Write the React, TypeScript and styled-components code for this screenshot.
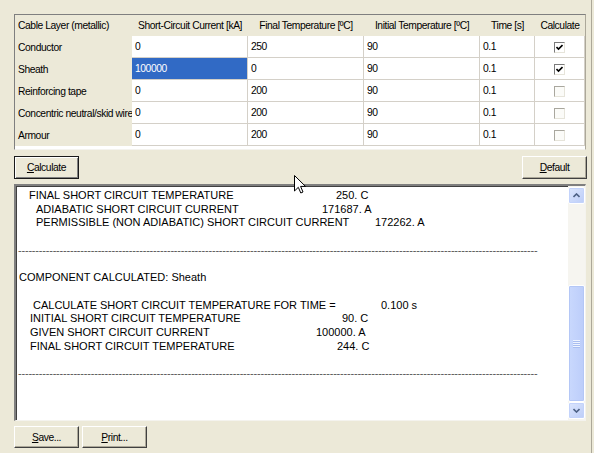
import React from 'react';
import styled, { createGlobalStyle, css } from 'styled-components';

const Global = createGlobalStyle`
  html, body { margin: 0; padding: 0; background: #ece9d8; }
  body { font-family: "Liberation Sans", Arial, sans-serif; font-size: 11px; color: #000; }
  * { box-sizing: border-box; }
`;

const uiFont = `"Liberation Sans", Arial, sans-serif`;

const Window = styled.div`
  position: relative;
  width: 592px;
  height: 453px;
  padding: 14px 0 0 14px;
  background: #ece9d8;
  border-right: 1px solid #aca899;
  overflow: hidden;
  display: flex;
  flex-direction: column;
`;

const GridPanel = styled.div`
  width: 572px;
  height: 136px;
  flex: 0 0 136px;
  border-top: 1px solid #7f7f7f;
  border-left: 1px solid #7f7f7f;
  border-right: 1px solid #aca899;
  border-bottom: 1px solid #f4f3ee;
  background: #fff;
  display: grid;
  grid-template-columns: 117px 116px 116px 116px 55px 50px;
  grid-template-rows: 21px;
  grid-auto-rows: 22px;
  align-content: start;
  font-family: ${uiFont};
  font-size: 10.3px;
  letter-spacing: -0.42px;
`;

const HeadCell = styled.div<{ $left?: boolean }>`
  background: #ece9d8;
  display: flex;
  align-items: center;
  justify-content: ${p => (p.$left ? 'flex-start' : 'center')};
  padding: 0 3px;
  white-space: nowrap;
  overflow: hidden;
  color: #000;
`;

const RowHead = styled.div`
  background: #ece9d8;
  display: flex;
  align-items: center;
  padding: 0 3px;
  white-space: nowrap;
  overflow: hidden;
`;

const Cell = styled.div<{ $selected?: boolean; $center?: boolean }>`
  display: flex;
  align-items: center;
  justify-content: ${p => (p.$center ? 'center' : 'flex-start')};
  padding: 0 3px;
  border-right: 1px solid #d4d0c8;
  border-bottom: 1px solid #d4d0c8;
  white-space: nowrap;
  overflow: hidden;
  ${p =>
    p.$selected &&
    css`
      background: #316ac5;
      color: #fff;
    `}
`;

const Check = styled.span<{ $checked?: boolean }>`
  width: 11px;
  height: 11px;
  display: flex;
  align-items: center;
  justify-content: center;
  border-top: 1px solid ${p => (p.$checked ? '#7a7a7a' : '#a9a79e')};
  border-left: 1px solid ${p => (p.$checked ? '#7a7a7a' : '#a9a79e')};
  border-right: 1px solid #e6e4da;
  border-bottom: 1px solid #e6e4da;
  background: ${p => (p.$checked ? '#fff' : '#fbfbf8')};
  margin-top: 2px;
`;

const ButtonRow = styled.div`
  width: 573px;
  height: 23px;
  flex: 0 0 23px;
  margin-top: 6px;
  display: flex;
  justify-content: space-between;
`;

const BottomRow = styled.div`
  width: 573px;
  height: 22px;
  flex: 0 0 22px;
  margin-top: 5px;
  display: flex;
  gap: 3px;
`;

const Button = styled.button<{ $focused?: boolean }>`
  width: 65px;
  height: 100%;
  padding: 0;
  background: #ece9d8;
  color: #000;
  font-family: ${uiFont};
  font-size: 10.3px;
  letter-spacing: -0.42px;
  border: 1px solid;
  border-color: #fff #404040 #404040 #fff;
  box-shadow: inset -1px -1px 0 #aca899;
  ${p =>
    p.$focused &&
    css`
      border-color: #1a1a1a;
      box-shadow: inset 1px 1px 0 #fff, inset -1px -1px 0 #808080;
    `}
  u { text-decoration: underline; }
`;

const Output = styled.div`
  width: 572px;
  height: 237px;
  flex: 0 0 237px;
  margin-top: 5px;
  background: #fff;
  border-top: 2px solid #7f7f7f;
  border-left: 2px solid #7f7f7f;
  border-right: 1px solid #f4f3ee;
  border-bottom: 1px solid #f4f3ee;
  box-shadow: inset 1px 1px 0 #404040;
  display: flex;
`;

const OutputText = styled.div`
  flex: 1;
  padding-top: 3px;
  font-family: "Liberation Sans", Arial, sans-serif;
  font-size: 11px;
  color: #000;
  overflow: hidden;
`;

const Line = styled.div<{ $indent?: number }>`
  display: flex;
  height: 13.7px;
  line-height: 13.7px;
  padding-left: ${p => p.$indent ?? 0}px;
  white-space: pre;
`;

const Label = styled.span<{ $w: number }>`
  flex: 0 0 ${p => p.$w}px;
`;

const Dashes = styled.div`
  white-space: nowrap;
  letter-spacing: -0.2px;
  color: #555;
`;

const ScrollBar = styled.div`
  width: 17px;
  flex: 0 0 17px;
  background: #f6f5f0;
  display: flex;
  flex-direction: column;
  padding: 1px 0;
`;

const ArrowBtn = styled.div`
  width: 17px;
  height: 17px;
  flex: 0 0 17px;
  border-radius: 2px;
  border: 1px solid #fff;
  background: linear-gradient(135deg, #dce6fd, #bccdf8);
  box-shadow: inset 0 0 0 1px #c3d3fb;
  display: flex;
  align-items: center;
  justify-content: center;
`;

const Track = styled.div`
  flex: 1;
  display: flex;
  flex-direction: column;
`;

const Thumb = styled.div`
  margin-top: auto;
  height: 117px;
  border-radius: 2px;
  border: 1px solid #fff;
  background: linear-gradient(90deg, #c9d8fd, #bccdfa);
  box-shadow: inset 0 0 0 1px #b4c7f6;
  display: flex;
  align-items: center;
  justify-content: center;
`;

const Grip = styled.div`
  width: 7px;
  display: flex;
  flex-direction: column;
  gap: 1px;
  span { height: 1px; background: #eef3ff; box-shadow: 0 1px 0 #a9bdf0; }
`;

const Cursor = styled.svg`
  position: absolute;
  left: 294px;
  top: 175px;
`;

type Row = {
  name: string;
  sc: string;
  fin: string;
  init: string;
  time: string;
  calc: boolean;
  sel?: boolean;
};

const rows: Row[] = [
  { name: 'Conductor', sc: '0', fin: '250', init: '90', time: '0.1', calc: true },
  { name: 'Sheath', sc: '100000', fin: '0', init: '90', time: '0.1', calc: true, sel: true },
  { name: 'Reinforcing tape', sc: '0', fin: '200', init: '90', time: '0.1', calc: false },
  { name: 'Concentric neutral/skid wire', sc: '0', fin: '200', init: '90', time: '0.1', calc: false },
  { name: 'Armour', sc: '0', fin: '200', init: '90', time: '0.1', calc: false },
];

const dash = '-'.repeat(150);

const Chevron = ({ up }: { up?: boolean }) => (
  <svg width="7" height="5" viewBox="0 0 7 5">
    <path
      d={up ? 'M0.5 4 L3.5 1 L6.5 4' : 'M0.5 1 L3.5 4 L6.5 1'}
      fill="none"
      stroke="#4d6185"
      strokeWidth="1.6"
    />
  </svg>
);

export default function App() {
  return (
    <>
      <Global />
      <Window>
        <GridPanel>
          <HeadCell $left>Cable Layer (metallic)</HeadCell>
          <HeadCell>Short-Circuit Current [kA]</HeadCell>
          <HeadCell>Final Temperature [ºC]</HeadCell>
          <HeadCell>Initial Temperature [ºC]</HeadCell>
          <HeadCell>Time [s]</HeadCell>
          <HeadCell>Calculate</HeadCell>
          {rows.map(r => (
            <React.Fragment key={r.name}>
              <RowHead>{r.name}</RowHead>
              <Cell $selected={r.sel}>{r.sc}</Cell>
              <Cell>{r.fin}</Cell>
              <Cell>{r.init}</Cell>
              <Cell>{r.time}</Cell>
              <Cell $center>
                <Check $checked={r.calc}>
                  {r.calc && (
                    <svg width="7" height="7" viewBox="0 0 7 7">
                      <path d="M0.5 3 L2.5 5 L6.5 1" fill="none" stroke="#000" strokeWidth="1.6" />
                    </svg>
                  )}
                </Check>
              </Cell>
            </React.Fragment>
          ))}
        </GridPanel>

        <ButtonRow>
          <Button $focused>
            <u>C</u>alculate
          </Button>
          <Button>
            <u>D</u>efault
          </Button>
        </ButtonRow>

        <Output>
          <OutputText>
            <Line $indent={13}>
              <Label $w={307}>FINAL SHORT CIRCUIT TEMPERATURE</Label>250. C
            </Line>
            <Line $indent={20}>
              <Label $w={286}>ADIABATIC SHORT CIRCUIT CURRENT</Label>171687. A
            </Line>
            <Line $indent={20}>
              <Label $w={339}>PERMISSIBLE (NON ADIABATIC) SHORT CIRCUIT CURRENT</Label>172262. A
            </Line>
            <Line />
            <Line $indent={2}>
              <Dashes>{dash}</Dashes>
            </Line>
            <Line />
            <Line $indent={3}>COMPONENT CALCULATED: Sheath</Line>
            <Line />
            <Line $indent={17}>
              <Label $w={348}>CALCULATE SHORT CIRCUIT TEMPERATURE FOR TIME =</Label>0.100 s
            </Line>
            <Line $indent={14}>
              <Label $w={312}>INITIAL SHORT CIRCUIT TEMPERATURE</Label>90. C
            </Line>
            <Line $indent={14}>
              <Label $w={286}>GIVEN SHORT CIRCUIT CURRENT</Label>100000. A
            </Line>
            <Line $indent={14}>
              <Label $w={307}>FINAL SHORT CIRCUIT TEMPERATURE</Label>244. C
            </Line>
            <Line />
            <Line $indent={2}>
              <Dashes>{dash}</Dashes>
            </Line>
          </OutputText>
          <ScrollBar>
            <ArrowBtn>
              <Chevron up />
            </ArrowBtn>
            <Track>
              <Thumb>
                <Grip>
                  <span />
                  <span />
                  <span />
                  <span />
                </Grip>
              </Thumb>
            </Track>
            <ArrowBtn>
              <Chevron />
            </ArrowBtn>
          </ScrollBar>
        </Output>

        <BottomRow>
          <Button>
            <u>S</u>ave...
          </Button>
          <Button>
            <u>P</u>rint...
          </Button>
        </BottomRow>

        <Cursor width="12" height="19" viewBox="0 0 12 19">
          <path d="M0.5 0.5 L0.5 16 L4.3 12.3 L6.8 18 L9 17 L6.6 11.4 L11.5 11.4 Z" fill="#fff" stroke="#000" strokeWidth="1" />
        </Cursor>
      </Window>
    </>
  );
}
